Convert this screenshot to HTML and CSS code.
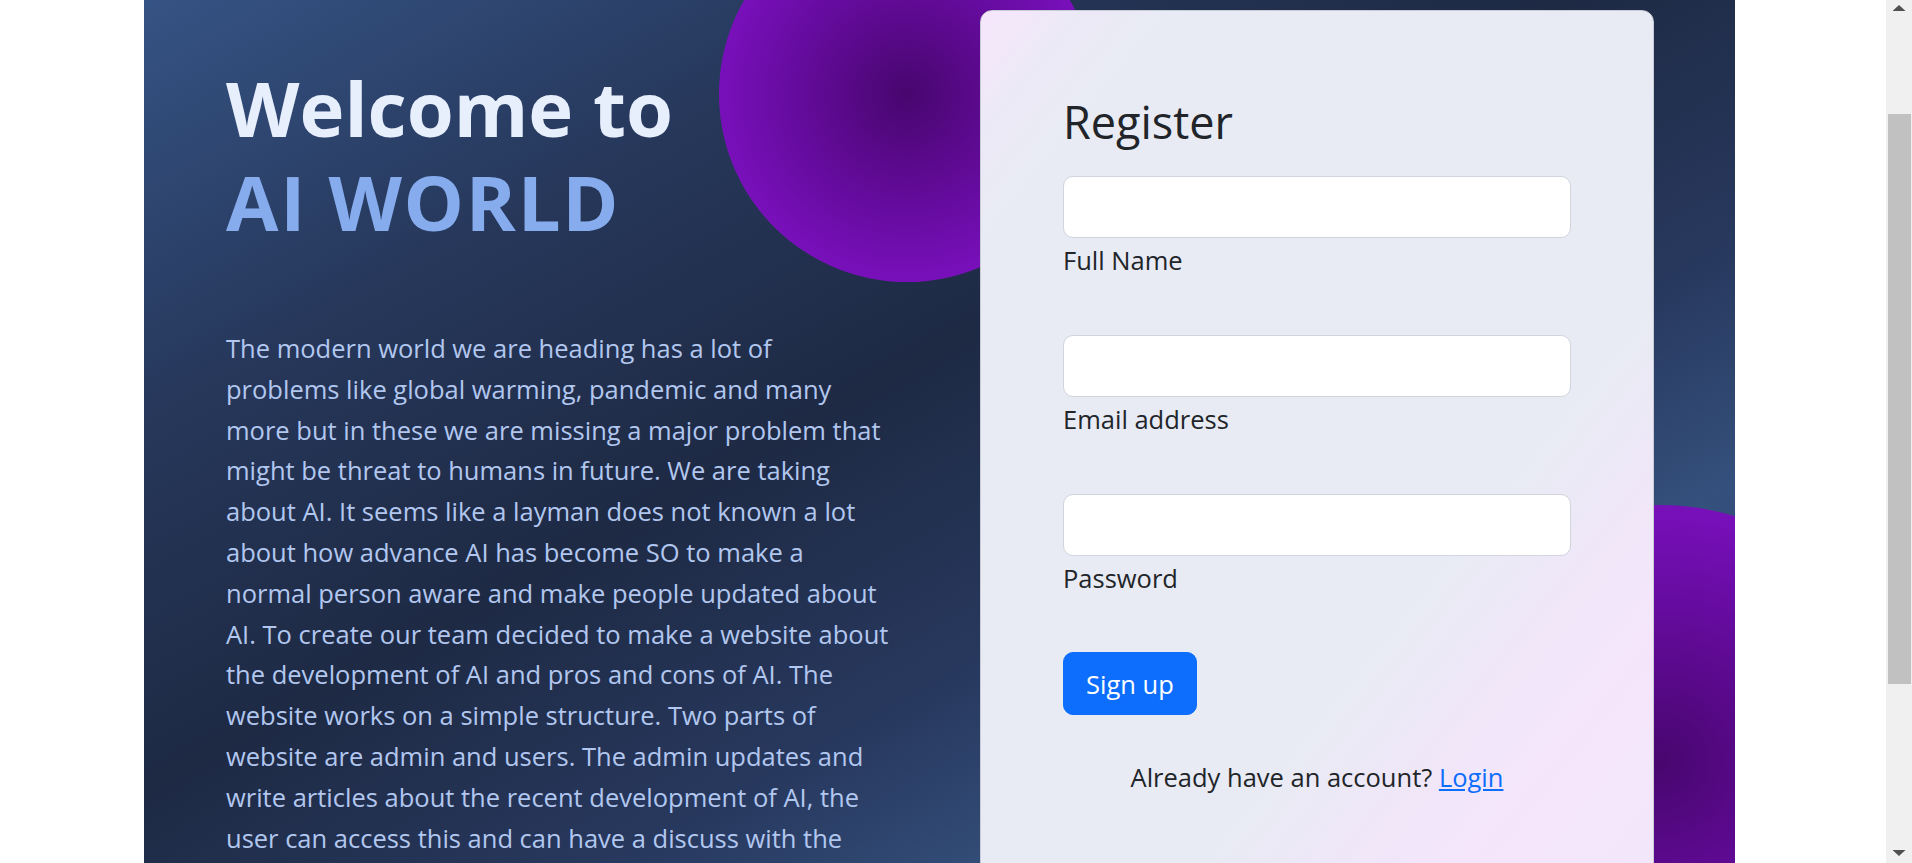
FILE: index.html
```html
<!DOCTYPE html>
<html lang="en">
<head>
<meta charset="utf-8">
<title>Register - AI WORLD</title>
<link rel="stylesheet" href="styles.css">
</head>
<body>
<section class="hero">
  <div class="blob blob-top"></div>
  <div class="blob blob-bottom"></div>

  <div class="intro">
    <h1 class="intro-title">Welcome to<br><span class="accent">AI WORLD</span></h1>
    <p class="intro-text">The modern world we are heading has a lot of<br>problems like global warming, pandemic and many<br>more but in these we are missing a major problem that<br>might be threat to humans in future. We are taking<br>about AI. It seems like a layman does not known a lot<br>about how advance AI has become SO to make a<br>normal person aware and make people updated about<br>AI. To create our team decided to make a website about<br>the development of AI and pros and cons of AI. The<br>website works on a simple structure. Two parts of<br>website are admin and users. The admin updates and<br>write articles about the recent development of AI, the<br>user can access this and can have a discuss with the<br>admin and other users about the topics.</p>
  </div>

  <div class="card">
    <h3 class="card-title">Register</h3>
    <form class="form">
      <div class="field">
        <input class="input" type="text" id="name">
        <label class="label" for="name">Full Name</label>
      </div>
      <div class="field">
        <input class="input" type="email" id="email">
        <label class="label" for="email">Email address</label>
      </div>
      <div class="field">
        <input class="input" type="password" id="password">
        <label class="label" for="password">Password</label>
      </div>
      <button class="btn" type="button">Sign up</button>
      <p class="switch">Already have an account? <a href="#" class="link">Login</a></p>
    </form>
  </div>
</section>

<div class="scrollbar" aria-hidden="true">
  <span class="sb-arrow sb-up"></span>
  <span class="sb-thumb"></span>
  <span class="sb-arrow sb-down"></span>
</div>
<script src="script.js"></script>
</body>
</html>
```

FILE: styles.css
```css
html {
  background: #ffffff;
}

body {
  margin: 0;
  font-family: "Open Sans", "Noto Sans", sans-serif;
  color: #212529;
}

/* window scrollbar */
.scrollbar {
  position: fixed;
  top: 0;
  right: 0;
  z-index: 10;
  width: 26px;
  height: 100vh;
  background: #f0f0f0;
  display: flex;
  flex-direction: column;
  align-items: center;
}
.sb-arrow {
  display: block;
  width: 13px;
  height: 6px;
  background: #505050;
}
.sb-up {
  margin-top: 5px;
  clip-path: polygon(50% 0, 100% 100%, 0 100%);
}
.sb-down {
  margin-top: auto;
  margin-bottom: 7px;
  clip-path: polygon(0 0, 100% 0, 50% 100%);
}
.sb-thumb {
  display: block;
  align-self: flex-end;
  width: 23px;
  height: 570px;
  margin-top: 103px;
  margin-right: 1px;
  background: #c1c1c1;
}

.hero {
  position: relative;
  overflow: hidden;
  box-sizing: border-box;
  width: 1591px;
  height: 1256px;
  margin-left: 144px;
  padding: 157px 81px 0 0;
  display: grid;
  grid-template-columns: 836px 674px;
  align-items: start;
  background: linear-gradient(151deg,
    #395989 0px,
    #355384 130px,
    #26375a 500px,
    #1e2a44 820px,
    #28395f 1120px,
    #34507c 1320px,
    #2b4068 1600px,
    #233353 1869px);
}

.blob {
  position: absolute;
  border-radius: 50%;
  background: radial-gradient(circle, #48066e 0%, #6a0ca6 50%, #8c16d6 100%);
}
.blob-top {
  left: 575px;
  top: 53px;
  width: 376px;
  height: 376px;
}
.blob-bottom {
  left: 1259px;
  top: 652px;
  width: 514px;
  height: 514px;
}

.intro {
  position: relative;
  z-index: 1;
  padding: 51px 0 0 82px;
}

.intro-title {
  margin: 0;
  font-size: 76px;
  line-height: 94px;
  font-weight: 700;
  color: #e7eefc;
}
.accent {
  color: #87acee;
  letter-spacing: 1.7px;
}

.intro-text {
  margin: 79px 0 0;
  font-size: 25.5px;
  line-height: 40.8px;
  color: #b2c7ef;
  white-space: nowrap;
}

.card {
  position: relative;
  z-index: 1;
  box-sizing: border-box;
  width: 674px;
  padding: 84px 82px 82px;
  border: 1px solid #c9ccd6;
  border-radius: 12px;
  background:
    linear-gradient(129deg,
      #f7e6fc 0%,
      #ece9f6 7%,
      #e8ebf4 14%,
      #e8ebf4 66%,
      #efe7f8 76%,
      #f5e5fb 86%,
      #f2e6fa 100%);
}

.card-title {
  margin: 0 0 27px;
  font-size: 45px;
  line-height: 54px;
  font-weight: 500;
  color: #212529;
}

.form {
  margin: 0;
}

.field {
  margin-bottom: 54px;
}

.input {
  display: block;
  box-sizing: border-box;
  width: 508px;
  height: 62px;
  margin: 0;
  padding: 0 20px;
  border: 1px solid #d0d4dc;
  border-radius: 10px;
  background: #ffffff;
  font: inherit;
  font-size: 25.5px;
}

.label {
  display: block;
  margin-top: 2px;
  font-size: 25.5px;
  line-height: 40.8px;
  color: #212529;
}

.btn {
  display: block;
  box-sizing: border-box;
  height: 63px;
  margin: 0;
  padding: 0 22px;
  border: 1px solid #0d6efd;
  border-radius: 10px;
  background: #0d6efd;
  color: #ffffff;
  font-family: inherit;
  font-size: 25.5px;
  line-height: 38px;
}

.switch {
  margin: 42px 0 0;
  text-align: center;
  font-size: 25.5px;
  line-height: 40.8px;
  color: #212529;
}

.link {
  color: #0d6efd;
  text-decoration: underline;
}
```

FILE: script.js
```js
window.scrollTo(0, 147);
```
